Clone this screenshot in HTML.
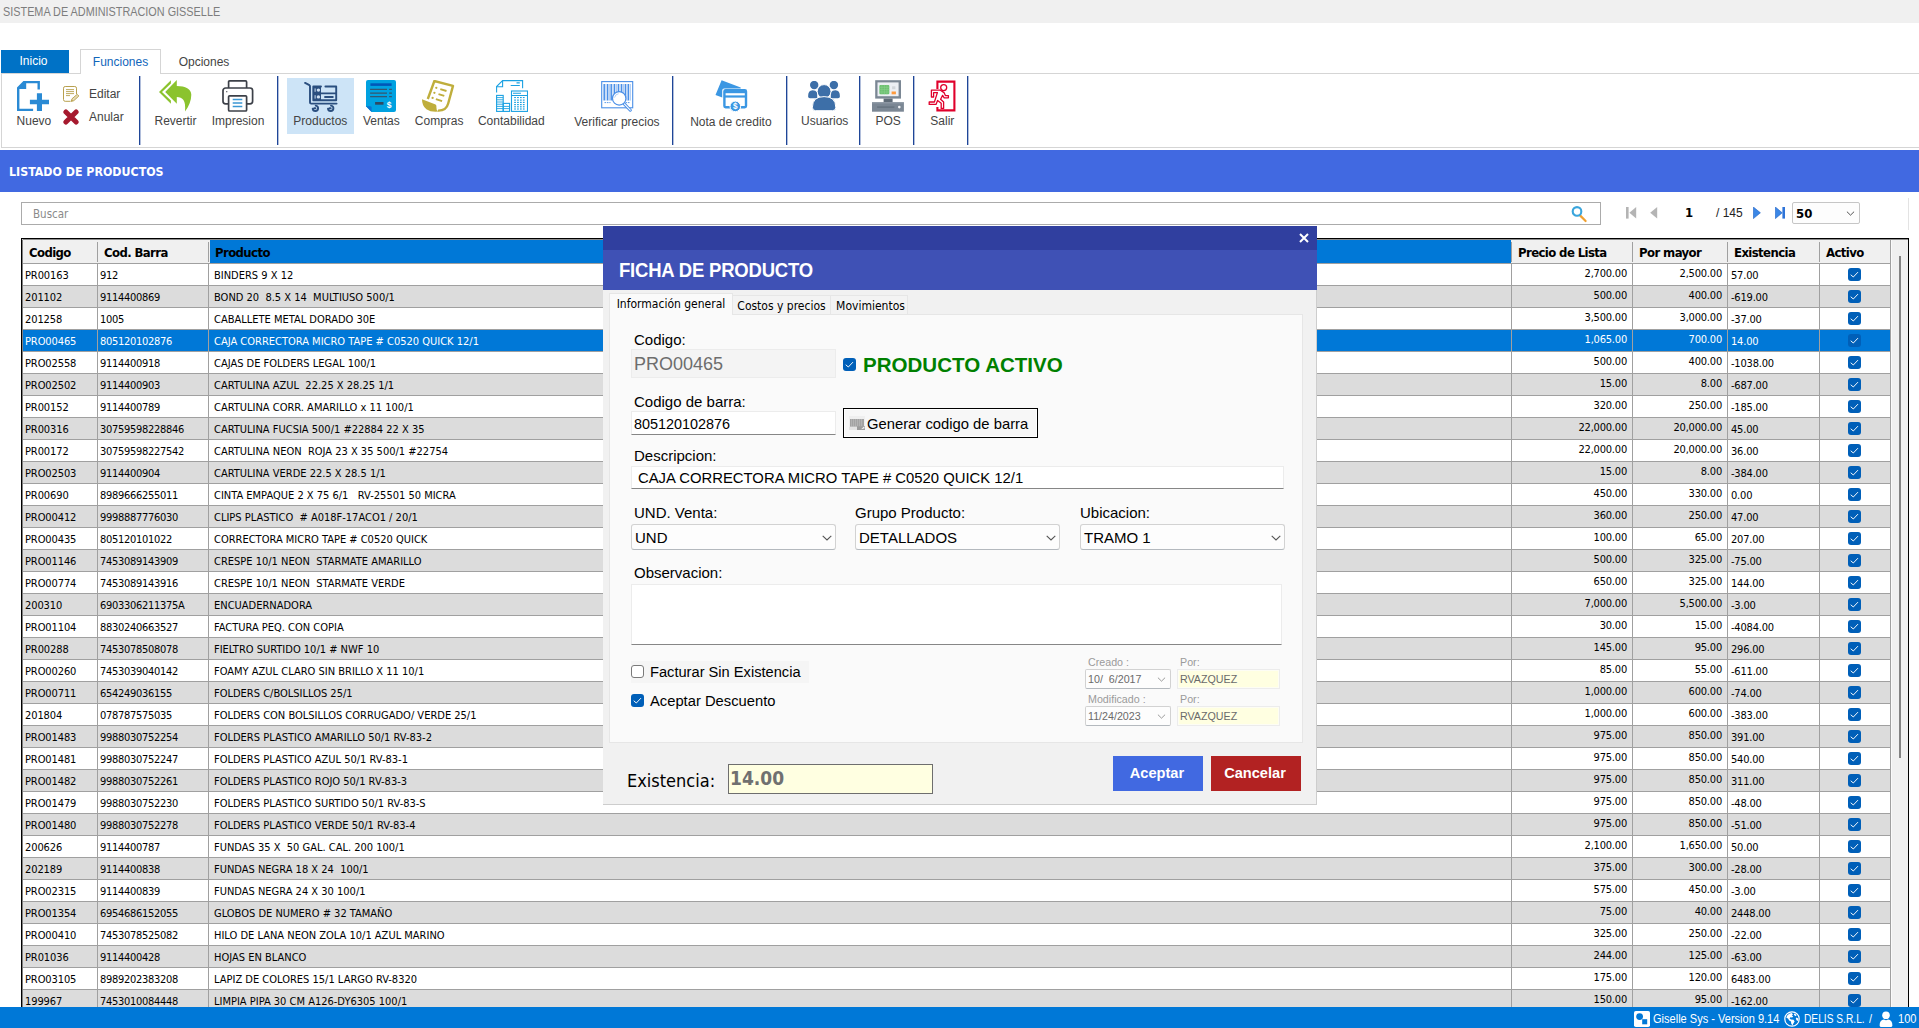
<!DOCTYPE html>
<html lang="es">
<head>
<meta charset="utf-8">
<title>SISTEMA DE ADMINISTRACION GISSELLE</title>
<style>
html,body{margin:0;padding:0}
body{width:1919px;height:1028px;overflow:hidden;background:#fff;position:relative;font-family:"Liberation Sans",sans-serif;font-size:12px;color:#000}
.abs,.abs>*{position:absolute}
div,span,i,b{box-sizing:border-box}
.tah{font-family:"DejaVu Sans Condensed","DejaVu Sans","Liberation Sans",sans-serif;font-stretch:condensed}
/* title bar */
#tb{position:absolute;left:0;top:0;width:1919px;height:23px;background:#f0f0f0}
#tb span{position:absolute;left:3px;top:0;line-height:23px;font-size:13px;color:#7d7d7d;white-space:nowrap;transform:scaleX(.835);transform-origin:0 50%}
/* tabs */
.tab{position:absolute;white-space:nowrap;font-size:12px;text-align:center}
#t1{left:1px;top:50px;width:68px;height:23px;background:#0072c6;color:#fff;line-height:22px;padding-right:3px}
#t2{left:80px;top:49px;width:81px;height:25px;background:#fff;border:1px solid #d5d5d5;border-bottom:none;color:#1166bb;line-height:24px;z-index:2}
#t3{left:171px;top:50px;width:66px;height:23px;color:#444;line-height:24px}
#rb{position:absolute;left:1px;top:73px;width:1925px;height:75px;border:1px solid #d5d5d5;background:#fff}
.sep{position:absolute;top:76px;width:1px;height:69px;background:#1f4698;box-shadow:1px 0 0 rgba(31,70,152,.35)}
.lbl{position:absolute;white-space:nowrap;font-size:12px;color:#444;line-height:14px}
.lc{width:120px;margin-left:-60px;text-align:center}
.ico{position:absolute}
#hl{position:absolute;left:287px;top:78px;width:67px;height:56px;background:#cde4f7}
#pgc{position:absolute;left:1792px;top:202px;width:68px;height:22px;border:1px solid #c6c6c6;border-radius:2px;background:#fdfdfd}
#pgc span{position:absolute;left:3px;top:0;line-height:21px;font-size:13px;font-weight:bold}
#pgc svg{position:absolute;right:4px;top:8px}
#redge{position:absolute;left:1908px;top:198px;width:1px;height:32px;background:#e3e3e3}
/* blue bar */
#bar{position:absolute;left:0;top:150px;width:1919px;height:42px;background:#4169e1}
#bar span{position:absolute;left:9px;top:0;line-height:45px;color:#fff;font-weight:bold;font-size:12.3px;white-space:nowrap}
/* search */
#sb{position:absolute;left:21px;top:202px;width:1580px;height:23px;border:1px solid #ababab;background:#fff}
#sb span{position:absolute;left:11px;top:0;line-height:23px;font-size:11.5px;color:#8a8a8a}
.nav{position:absolute;white-space:nowrap}
/* grid */
.grid{position:absolute;left:21px;top:238px;width:1888px;height:800px;border:solid #000;border-width:2px 1px 0 2px;background:#f0f0f0;overflow:hidden;font-size:11px}
.gh{position:absolute;left:0;top:0;width:1867px;height:24px;background:#f0f0f0;border-bottom:1px solid #a0a0a0}
.hc{position:absolute;top:0;height:23px;line-height:25px;font-weight:bold;font-size:13px;letter-spacing:-.6px;white-space:nowrap}
.hc span{position:absolute;left:6px;top:0}
.hc:after{content:"";position:absolute;right:-1px;top:2px;width:1px;height:20px;background:#a0a0a0}
.hc.last:after{top:0;height:24px}
.hc.sel{background:linear-gradient(90deg,#f0f0f0 1px,#0078d7 1px)}
.r{position:absolute;left:0;width:1868px;height:22px;background:#fff;border-bottom:1px solid #a0a0a0;line-height:23px;white-space:pre}
.r.alt{background:#dcdcdc}
.r.sel{background:#0078d7;color:#fff}
.c{position:absolute;top:0;height:21px;border-right:1px solid #a0a0a0;overflow:hidden}
.c1{left:0;width:75px;padding-left:2px;letter-spacing:-.1px}
.c2{left:75px;width:111px;padding-left:2px;letter-spacing:-.3px}
.c3{left:186px;width:1303px;padding-left:5px}
.c4{left:1489px;width:121px;text-align:right;padding-right:5px;letter-spacing:-.2px;line-height:19px}
.c5{left:1610px;width:95px;text-align:right;padding-right:5px;letter-spacing:-.2px;line-height:19px}
.c6{left:1705px;width:92px;padding-left:3px;letter-spacing:-.2px}
.c7{left:1797px;width:71px}
.ck{position:absolute;left:28px;top:4px;width:13px;height:13px;border-radius:3px;background:#005fb8;display:block}
.ck svg{position:absolute;left:0;top:0}
.vsb{position:absolute;left:1868px;top:0;width:17px;height:800px;background:#f0f0f0;border-left:1px solid #fafafa}
.vsb i{position:absolute;left:7px;top:16px;width:2px;height:502px;background:#838383;display:block}

/* dialog */
#dlg{position:absolute;left:603px;top:226px;width:714px;height:579px;box-shadow:inset -1px -1px 0 #cdcdcd;background:#f1f1f1;font-size:15px;color:#000}
#dlg>*{position:absolute}
#dt1{left:0;top:0;width:714px;height:24px;background:#303f9f}
#dt2{left:0;top:24px;width:714px;height:40px;background:#3f51b5}
#dt2 span{position:absolute;left:16px;top:0;line-height:40px;color:#fff;font-weight:bold;font-size:19.5px;white-space:nowrap;letter-spacing:-.2px;transform:scaleX(.948);transform-origin:0 50%}
#dx{left:696px;top:7px}
#page{left:6px;top:88px;width:694px;height:429px;background:#fafafa;border:1px solid #e6e6e6}
.dtab{font-size:12px;white-space:nowrap;text-align:center;color:#000}
#dtab1{left:6px;top:67px;width:124px;height:22px;background:#fafafa;border:1px solid #e6e6e6;border-bottom:none;line-height:20px}
#dtab2{left:129px;top:69px;width:99px;height:19px;background:#f3f3f3;border:1px solid #e6e6e6;border-bottom:none;line-height:20px}
#dtab3{left:227px;top:69px;width:78px;height:19px;background:#f3f3f3;border:1px solid #e6e6e6;border-bottom:none;line-height:20px;text-indent:3px}
.fl{white-space:nowrap;font-size:15px;line-height:18px;color:#000}
.inp{background:#fff;border:1px solid #ececec}
.inp.ul{border-bottom:1px solid #868686}
.inp span{position:absolute;white-space:nowrap}
#icod{left:28px;top:123px;width:205px;height:29px;background:#f4f4f4;border:1px solid #ececec}
#icod span{left:2px;top:0;line-height:29px;font-size:18px;color:#6d6d6d}
.ck2{width:13px;height:13px;border-radius:3px;background:#005fb8;display:block}
.ck2 svg{position:absolute;left:0;top:0}
.cku{width:13px;height:13px;border-radius:3px;background:#fff;border:1px solid #7a7a7a;display:block}
#pact{left:260px;top:127px;font-size:20.55px;font-weight:bold;color:#008000;white-space:nowrap;line-height:24px}
#ibar{left:28px;top:185px;width:205px;height:24px}
#ibar span{left:2px;top:0;line-height:25px;font-size:14.4px}
#bgen{left:240px;top:182px;width:195px;height:30px;border:1px solid #000;background:#f7f7f7;box-shadow:inset 0 0 0 1px #fff}
#bgen span{position:absolute;left:23px;top:0;line-height:30px;white-space:nowrap;font-size:14.8px}
#ides{left:28px;top:240px;width:653px;height:23px}
#ides span{left:6px;top:0;line-height:22px;font-size:14.85px}
.cmb{width:205px;height:26px;background:#fdfdfd;border:1px solid #d2d2d2;border-bottom-color:#b4b9be;border-radius:3px}
.cmb span{position:absolute;left:3px;top:0;line-height:25px;white-space:nowrap}
.cmb svg{position:absolute;right:3px;top:10px}
#iobs{left:28px;top:358px;width:651px;height:61px}
#cbg1{left:28px;top:435px;width:178px;height:22px;background:#f5f5f5}
.sl{font-size:10.7px;color:#9a9a9a;white-space:nowrap;line-height:13px}
.dcb{width:86px;height:20px;background:#fdfdfd;border:1px solid #d2d2d2;border-bottom-color:#b4b9be;border-radius:2px}
.dcb span{position:absolute;left:2px;top:0;line-height:18px;font-size:10.7px;color:#6a6a6a;white-space:pre}
.dcb svg{position:absolute;right:4px;top:7px}
.ybx{width:103px;height:20px;box-shadow:inset 0 0 0 1px #fdfdf4;background:#ffffe1;border:1px solid #ececec}
.ybx span{position:absolute;left:2px;top:0;line-height:18px;font-size:10.7px;color:#6a6a6a}
#exl{left:24px;top:543px;font-size:18px;line-height:24px;white-space:nowrap}
#exb{left:125px;top:538px;width:205px;height:30px;background:#ffffe1;border:1px solid #6e6e6e}
#exb span{position:absolute;left:1px;top:0;line-height:27px;font-size:19px;font-weight:bold;color:#707070}
.btn{padding-right:2px;color:#fff;font-weight:bold;font-size:14.6px;text-align:center;white-space:nowrap}
#bok{left:510px;top:530px;width:90px;height:35px;background:#4169e1;line-height:34px}
#bcn{left:608px;top:530px;width:90px;height:35px;background:#b22222;line-height:34px}
.gl1{position:absolute;left:22px;top:239px;width:1px;height:768px;background:rgba(255,255,255,.5)}
.gl2{position:absolute;left:22px;top:239px;width:1886px;height:1px;background:rgba(255,255,255,.55)}
/* status */
#st{position:absolute;left:0;top:1007px;width:1919px;height:21px;background:#0078d7;color:#fff;font-size:12px}
#st span{position:absolute;top:0;line-height:24px;white-space:nowrap;transform:scaleX(.92);transform-origin:0 50%}
#st svg{position:absolute}
</style>
</head>
<body>
<div id="tb"><span>SISTEMA DE ADMINISTRACION GISSELLE</span></div>
<div class="tab" id="t1">Inicio</div>
<div class="tab" id="t2">Funciones</div>
<div class="tab" id="t3">Opciones</div>
<div id="rb"></div>
<div id="hl"></div>
<i class="sep" style="left:139px"></i><i class="sep" style="left:277px"></i><i class="sep" style="left:672px"></i><i class="sep" style="left:786px"></i><i class="sep" style="left:859px"></i><i class="sep" style="left:913px"></i><i class="sep" style="left:967px"></i>

<!-- Nuevo -->
<svg class="ico" style="left:17px;top:81px" width="32" height="31" viewBox="0 0 32 31"><path d="M6.4 0H22.9V8.6H20.5V2.3H9.2V8H2.4V27.7H16.1V30.1H0V6.4Z" fill="#2a8ad4"/><path d="M19.9 12.3h5.1v6.45h7v4.5h-7v6.85h-5.1v-6.85h-7v-4.5h7z" fill="#2a8ad4"/></svg>
<span class="lbl lc" style="left:33.9px;top:114px">Nuevo</span>
<!-- Editar -->
<svg class="ico" style="left:63px;top:86px" width="17" height="16" viewBox="0 0 17 16"><path d="M13.5 8V2.2Q13.5 .5 11.8 .5H2.2Q.5 .5 .5 2.2V13.6Q.5 15.3 2.2 15.3H7.5" fill="none" stroke="#b8a04e" stroke-width="1"/><path d="M3 3.6H11M3 5.6H11M3 7.6H11M3 9.6H7" stroke="#b8a04e" stroke-width=".9"/><path d="M8.2 15.4L9 12.8L14.2 8.3L15.9 10L10.8 14.7Z" fill="#e6dbb4" stroke="#b8a04e" stroke-width=".9" stroke-linejoin="round"/><path d="M8.2 15.4L8.8 13.6L10 14.8Z" fill="#b8a04e"/></svg>
<span class="lbl" style="left:89px;top:87px">Editar</span>
<!-- Anular -->
<svg class="ico" style="left:63px;top:109px" width="16" height="16" viewBox="0 0 16 16"><path d="M2.9 2.9L13.1 13.1M13.1 2.9L2.9 13.1" stroke="#a6192e" stroke-width="5" stroke-linecap="round"/></svg>
<span class="lbl" style="left:89px;top:110px">Anular</span>
<!-- Revertir -->
<svg class="ico" style="left:159px;top:80px" width="33" height="32" viewBox="0 0 33 32"><path d="M11.9 .3L0 11.9L11.9 23.8V20.6L3 11.9L11.9 3.4Z" fill="#8bc32e"/><path d="M17.8 0L6.2 11.9L17.8 23.8V17.1C23.5 17.1 27.2 20.5 26 31.6C30 26 32.3 20.5 32.3 14.7C32.3 9.2 26.5 5.9 17.8 5.9Z" fill="#8bc32e"/></svg>
<span class="lbl lc" style="left:175.5px;top:114px">Revertir</span>
<!-- Impresion -->
<svg class="ico" style="left:222px;top:80px" width="32" height="32" viewBox="0 0 32 32"><g fill="#fff" stroke="#3c4048" stroke-width="1.7" stroke-linejoin="round"><path d="M6.6 8V2Q6.6 .9 7.7 .9H23.5Q24.6 .9 24.6 2V8"/><rect x="1" y="8" width="29.6" height="15.8" rx="2.6"/><rect x="6.6" y="15.8" width="18" height="15.2" rx="1"/></g><path d="M10.7 19.4H20.3M10.7 22.9H20.3M10.7 26.5H20.3" stroke="#3b97d3" stroke-width="1.5"/><rect x="4" y="11.3" width="1.4" height=".9" fill="#3c4048"/></svg>
<span class="lbl lc" style="left:238px;top:114px">Impresion</span>
<!-- Productos -->
<svg class="ico" style="left:303.7px;top:81.5px" width="34" height="31" viewBox="0 0 34 31"><g fill="none" stroke="#2b4f7f" stroke-width="1.9" stroke-linecap="round" stroke-linejoin="round"><path d="M1.1 .9L5.4 3.2Q6 3.6 6 4.4V20.4Q6 21.6 7.2 21.6H32.6"/><path d="M21.4 4.5H32.2V18.3H9.3V4.5H17M9.3 11.4H32.2"/><path d="M21 15H28.8"/><path d="M8.7 26.6A2.7 2.7 0 1 0 11.7 23.6M10.2 26.2H11.4"/><path d="M24 26.6A2.7 2.7 0 1 0 27 23.6M25.5 26.2H26.7"/></g><rect x="9.3" y="4.5" width="7.7" height="13.8" fill="#2b4f7f"/><circle cx="14.4" cy="8.1" r="1.7" fill="#cfe0f2"/><circle cx="14.4" cy="14.9" r="1.7" fill="#cfe0f2"/><rect x="10.6" y="6.4" width="1" height="3.4" fill="#cfe0f2"/><rect x="10.6" y="13.2" width="1" height="3.4" fill="#cfe0f2"/></svg>
<span class="lbl lc" style="left:320.3px;top:114px">Productos</span>
<!-- Ventas -->
<svg class="ico" style="left:366px;top:80px" width="30" height="32" viewBox="0 0 30 32"><path d="M2 0H28Q30 0 30 2V30Q30 32 28 32H5.6L0 26.2V2Q0 0 2 0Z" fill="#00a1e0"/><path d="M0 26.2H4.2Q5.6 26.2 5.6 27.6V32Z" fill="#0a73d0"/><rect x="4.4" y="3.3" width="21.2" height="2.6" fill="#0057b8"/><path d="M4.1 9.4H21M23.1 9.4H25.9M4.1 13.1H21M23.1 13.1H25.9M4.1 16.7H21M23.1 16.7H25.9" stroke="#35566f" stroke-width="1.2"/><rect x="9.1" y="22" width="8.4" height="2.7" fill="#2f4a63"/><text x="20.8" y="27.9" font-family="Liberation Sans, sans-serif" font-weight="bold" font-size="8.5" fill="#fff">$</text></svg>
<span class="lbl lc" style="left:381.4px;top:114px">Ventas</span>
<!-- Compras -->
<svg class="ico" style="left:421px;top:80px" width="34" height="33" viewBox="0 0 34 33"><path d="M6.8 19L13.4 1L32 5.9L27.2 23.5Q25.3 30.8 17 30.6" fill="none" stroke="#bfae3c" stroke-width="2.4" stroke-linejoin="round"/><path d="M1 19.2L14.6 24.6Q15.8 25.6 15.4 27.2Q15 29.6 17.4 31.6Q10 32.4 5.4 29.2Q1 26 1 19.2Z" fill="#bfae3c"/><circle cx="15.3" cy="7.8" r="1.15" fill="#bfae3c"/><circle cx="13.4" cy="12.8" r="1.15" fill="#bfae3c"/><circle cx="11.6" cy="17.9" r="1.15" fill="#bfae3c"/><path d="M19.3 9.1L25.5 11M17.5 14.2L23.3 15.9M14.9 19.2L21.1 21.2" stroke="#bfae3c" stroke-width="1.9"/></svg>
<span class="lbl lc" style="left:439.2px;top:114px">Compras</span>
<!-- Contabilidad -->
<svg class="ico" style="left:496px;top:80px" width="32" height="32" viewBox="0 0 32 32"><g fill="none" stroke="#1ba1e2" stroke-width="1.1"><path d="M.6 12.4V6.6L6.6 .6H26.6V8.2"/><path d="M6.6 .6V6.8H.6"/><path d="M14.7 5.5H23.8M20.5 2.9H23.8"/><rect x="15.5" y="11" width="16" height="20.4"/><path d="M15.5 15.5H31.5M17 13.2H25"/><rect x=".6" y="15.4" width="6.6" height="16"/><rect x="7.2" y="23.4" width="6.4" height="8"/><path d="M.6 17.6H7.2M.6 19.8H7.2M.6 22H7.2M.6 24.2H7.2M.6 26.4H13.6M.6 28.6H13.6" stroke-width=".9"/></g><g fill="#1ba1e2"><rect x="18.2" y="17" width="1.7" height="1.1"/><rect x="21.1" y="17" width="1.7" height="1.1"/><rect x="24" y="17" width="1.7" height="1.1"/><rect x="26.9" y="17" width="1.7" height="1.1"/><rect x="18.2" y="19.5" width="1.7" height="1.2"/><rect x="21.1" y="19.5" width="1.7" height="1.2"/><rect x="24" y="19.5" width="1.7" height="1.2"/><rect x="26.9" y="19.5" width="1.7" height="1.2"/><rect x="18.2" y="21.8" width="1.7" height="1.2"/><rect x="21.1" y="21.8" width="1.7" height="1.2"/><rect x="24" y="21.8" width="1.7" height="1.2"/><rect x="26.9" y="21.8" width="1.7" height="1.2"/><rect x="18.2" y="24" width="1.7" height="1.2"/><rect x="21.1" y="24" width="1.7" height="1.2"/><rect x="24" y="24" width="1.7" height="1.2"/><rect x="26.9" y="24" width="1.7" height="1.2"/><rect x="18.2" y="26.2" width="1.7" height="1.2"/><rect x="21.1" y="26.2" width="1.7" height="1.2"/><rect x="24" y="26.2" width="1.7" height="1.2"/><rect x="26.9" y="26.2" width="1.7" height="1.2"/><rect x="18.2" y="28.4" width="1.7" height="1.2"/><rect x="21.1" y="28.4" width="1.7" height="1.2"/><rect x="24" y="28.4" width="1.7" height="1.2"/><rect x="26.9" y="28.4" width="1.7" height="1.2"/></g></svg>
<span class="lbl lc" style="left:511.3px;top:114px">Contabilidad</span>
<!-- Verificar precios -->
<svg class="ico" style="left:601px;top:81px" width="33" height="31" viewBox="0 0 33 31"><rect x=".7" y=".6" width="31" height="26.2" fill="#fff" stroke="#4a8fe7" stroke-width="1.1"/><path d="M3.2 3V19.6M6.6 3V19.6M10.2 3V19.6M13.5 3V19.6M17.4 3V19.6M20.6 3V19.6M24.4 3V19.6M27.4 3V19.6" stroke="#4a8fe7" stroke-width="1.5"/><path d="M4.9 3V19.6M8.3 3V19.6M12 3V19.6M15.4 3V19.6M19 3V19.6M22.4 3V19.6M26 3V19.6M29.3 3V19.6" stroke="#8ab6f0" stroke-width=".8"/><path d="M3.5 21.6H9.5M24.5 21.6H28.8" stroke="#4a8fe7" stroke-width=".9" stroke-dasharray="1.6 .8"/><path d="M23 22.6L29.3 29.2" stroke="#4a8fe7" stroke-width="3" stroke-linecap="round"/><path d="M23 22.6L29.3 29.2" stroke="#fff" stroke-width="1.1" stroke-linecap="round"/><circle cx="18.2" cy="17.4" r="6.7" fill="#fff" stroke="#4a8fe7" stroke-width="1.2"/><path d="M13.6 16.6A4.8 4.8 0 0 1 17.6 12.7" fill="none" stroke="#a9c9f3" stroke-width=".9"/></svg>
<span class="lbl lc" style="left:616.9px;top:115px">Verificar precios</span>
<!-- Nota de credito -->
<svg class="ico" style="left:715px;top:80px" width="33" height="32" viewBox="0 0 33 32"><path d="M6.6 .2L25.7 7.5V12H10V18.6L.5 15.1Z" fill="#3b97e3"/><rect x="7.2" y="8.6" width="26" height="21" rx="2" fill="#fff"/><path d="M15.2 27.2H10.6Q9.4 27.2 9.4 26V11.4Q9.4 10.2 10.6 10.2H29.8Q31 10.2 31 11.4V26Q31 27.2 29.8 27.2H25.6" fill="none" stroke="#3b97e3" stroke-width="2.4"/><rect x="9.4" y="10.2" width="21.6" height="3" fill="#3b97e3"/><rect x="9.4" y="15.4" width="21.6" height="2.2" fill="#3b97e3"/><circle cx="20.3" cy="26.4" r="5.3" fill="#3b97e3" stroke="#fff" stroke-width="1"/><text x="18" y="29.3" font-family="Liberation Sans, sans-serif" font-weight="bold" font-size="8.2" fill="#fff">$</text></svg>
<span class="lbl lc" style="left:730.9px;top:115px">Nota de credito</span>
<!-- Usuarios -->
<svg class="ico" style="left:808px;top:81px" width="32" height="30" viewBox="0 0 32 30"><g fill="#3d6fa8"><circle cx="6.2" cy="4" r="4.2"/><circle cx="25.9" cy="4" r="4.2"/><path d="M.1 15.4Q0 9.2 4.6 9.2Q7.6 9.2 9.2 11.6V17.2H2Q.1 17.2 .1 15.4Z"/><path d="M31.9 15.4Q32 9.2 27.4 9.2Q24.4 9.2 22.8 11.6V17.2H30Q31.9 17.2 31.9 15.4Z"/></g><circle cx="16.1" cy="10.5" r="6.9" fill="#3d6fa8" stroke="#fff" stroke-width="1"/><path d="M4.4 26.4Q4.4 15.6 16.1 15.6Q27.8 15.6 27.8 26.4Q27.8 29.7 24.6 29.7H7.6Q4.4 29.7 4.4 26.4Z" fill="#3d6fa8" stroke="#fff" stroke-width="1"/></svg>
<span class="lbl lc" style="left:824.7px;top:114px">Usuarios</span>
<!-- POS -->
<svg class="ico" style="left:872px;top:80px" width="32" height="32" viewBox="0 0 32 32"><rect x="3.2" y=".2" width="25.8" height="18.4" fill="#7b8794"/><rect x="5.5" y="2.4" width="21.1" height="13.8" fill="#eceff4"/><rect x="7.4" y="4.9" width="9.9" height="9.4" rx="1" fill="#6cc070"/><path d="M9.9 4.9V14.3M12.4 4.9V14.3M14.9 4.9V14.3M7.4 7.3H17.3M7.4 9.6H17.3M7.4 12H17.3" stroke="#8fd391" stroke-width=".5"/><rect x="20.1" y="6.3" width="3.3" height="2.9" fill="#d2d6db"/><rect x="19.6" y="11.5" width="4.3" height="2.8" fill="#ff9a3c"/><rect x="11.6" y="18.6" width="9" height="3.8" fill="#5f6b77"/><rect x="0" y="22.3" width="31.9" height="9.4" fill="#7b8794"/><rect x="0" y="22.3" width="31.9" height="1.2" fill="#8b96a2"/><path d="M5.1 27.1H22.4" stroke="#66727e" stroke-width="1.4"/><circle cx="27.3" cy="27.1" r="1.3" fill="#f2f4f6"/></svg>
<span class="lbl lc" style="left:888.2px;top:114px">POS</span>
<!-- Salir -->
<svg class="ico" style="left:928px;top:80px" width="29" height="32" viewBox="0 0 29 32"><path d="M9.4 9V1.6H26.4V30.4H9.4V27" fill="none" stroke="#e0002b" stroke-width="2.1"/><g fill="#fff" stroke="#e0002b" stroke-width="1.3" stroke-linejoin="round"><circle cx="15.7" cy="7.6" r="3"/><path d="M3.4 10.2H12.4L16 12.6L17.4 15.6H20.4V17.8H16.2L14.6 15.4L12.6 19.2L15.6 22V28.4H13.2V23.2L9.6 20.4L8 24.4H1.2V22H6.4L9.4 12.6H5.6V17H3.4Z"/></g></svg>
<span class="lbl lc" style="left:942.3px;top:114px">Salir</span>

<div id="bar" class="tah"><span>LISTADO DE PRODUCTOS</span></div>
<div id="sb" class="tah"><span>Buscar</span></div>
<svg class="ico" style="left:1571px;top:206px" width="17" height="17" viewBox="0 0 17 17"><path d="M9 9.4L14.6 15" stroke="#f0a030" stroke-width="2.2" stroke-linecap="round"/><circle cx="6" cy="5.4" r="4.3" fill="#fff" stroke="#3aa5dc" stroke-width="2.1"/></svg>
<!-- pager -->
<svg class="ico" style="left:1626px;top:207px" width="11" height="12" viewBox="0 0 11 12"><rect x="0" y="0" width="2.6" height="11.6" fill="#b4b4b4"/><path d="M10.2 0L3.4 5.8L10.2 11.6Z" fill="#b4b4b4"/></svg>
<svg class="ico" style="left:1650px;top:207px" width="8" height="12" viewBox="0 0 8 12"><path d="M7.2 0L.2 5.8L7.2 11.6Z" fill="#b4b4b4"/></svg>
<span class="nav tah" style="left:1685px;top:205px;font-size:13px;font-weight:bold;line-height:16px">1</span>
<span class="nav" style="left:1716px;top:205px;font-size:12px;line-height:16px;color:#222">/ 145</span>
<svg class="ico" style="left:1753px;top:207px" width="8" height="12" viewBox="0 0 8 12"><path d="M.4 0L7.4 5.8L.4 11.6Z" fill="#3b87e6" stroke="#1f62c4" stroke-width=".6"/></svg>
<svg class="ico" style="left:1775px;top:207px" width="11" height="12" viewBox="0 0 11 12"><path d="M.4 0L7.2 5.8L.4 11.6Z" fill="#3b87e6" stroke="#1f62c4" stroke-width=".6"/><rect x="7.4" y="0" width="2.6" height="11.6" fill="#2f74d8"/></svg>
<div id="pgc"><span class="tah">50</span><svg viewBox="0 0 10 6" width="9" height="5"><path d="M.7 .8L5 5L9.3 .8" fill="none" stroke="#444" stroke-width="1.1"/></svg></div>
<i id="redge"></i>
<div class="grid tah">
<div class="gh">
<div class="hc" style="left:0px;width:74px"><span>Codigo</span></div>
<div class="hc" style="left:75px;width:110px"><span>Cod. Barra</span></div>
<div class="hc sel" style="left:186px;width:1302px"><span>Producto</span></div>
<div class="hc" style="left:1489px;width:120px"><span>Precio de Lista</span></div>
<div class="hc" style="left:1610px;width:94px"><span>Por mayor</span></div>
<div class="hc" style="left:1705px;width:91px"><span>Existencia</span></div>
<div class="hc last" style="left:1797px;width:70px"><span>Activo</span></div>
</div>
<div class="r" style="top:24px"><span class="c c1">PR00163</span><span class="c c2">912</span><span class="c c3">BINDERS 9 X 12</span><span class="c c4">2,700.00</span><span class="c c5">2,500.00</span><span class="c c6">57.00</span><span class="c c7"><i class="ck"><svg viewBox="0 0 13 13" width="13" height="13"><path d="M3 7 L5.3 9 L9.7 4.4" fill="none" stroke="#fff" stroke-width=".95" stroke-linecap="round" stroke-linejoin="round"/></svg></i></span></div>
<div class="r alt" style="top:46px"><span class="c c1">201102</span><span class="c c2">9114400869</span><span class="c c3">BOND 20  8.5 X 14  MULTIUSO 500/1</span><span class="c c4">500.00</span><span class="c c5">400.00</span><span class="c c6">-619.00</span><span class="c c7"><i class="ck"><svg viewBox="0 0 13 13" width="13" height="13"><path d="M3 7 L5.3 9 L9.7 4.4" fill="none" stroke="#fff" stroke-width=".95" stroke-linecap="round" stroke-linejoin="round"/></svg></i></span></div>
<div class="r" style="top:68px"><span class="c c1">201258</span><span class="c c2">1005</span><span class="c c3">CABALLETE METAL DORADO 30E</span><span class="c c4">3,500.00</span><span class="c c5">3,000.00</span><span class="c c6">-37.00</span><span class="c c7"><i class="ck"><svg viewBox="0 0 13 13" width="13" height="13"><path d="M3 7 L5.3 9 L9.7 4.4" fill="none" stroke="#fff" stroke-width=".95" stroke-linecap="round" stroke-linejoin="round"/></svg></i></span></div>
<div class="r alt sel" style="top:90px"><span class="c c1">PRO00465</span><span class="c c2">805120102876</span><span class="c c3">CAJA CORRECTORA MICRO TAPE # C0520 QUICK 12/1</span><span class="c c4">1,065.00</span><span class="c c5">700.00</span><span class="c c6">14.00</span><span class="c c7"><i class="ck"><svg viewBox="0 0 13 13" width="13" height="13"><path d="M3 7 L5.3 9 L9.7 4.4" fill="none" stroke="#fff" stroke-width=".95" stroke-linecap="round" stroke-linejoin="round"/></svg></i></span></div>
<div class="r" style="top:112px"><span class="c c1">PRO02558</span><span class="c c2">9114400918</span><span class="c c3">CAJAS DE FOLDERS LEGAL 100/1</span><span class="c c4">500.00</span><span class="c c5">400.00</span><span class="c c6">-1038.00</span><span class="c c7"><i class="ck"><svg viewBox="0 0 13 13" width="13" height="13"><path d="M3 7 L5.3 9 L9.7 4.4" fill="none" stroke="#fff" stroke-width=".95" stroke-linecap="round" stroke-linejoin="round"/></svg></i></span></div>
<div class="r alt" style="top:134px"><span class="c c1">PRO02502</span><span class="c c2">9114400903</span><span class="c c3">CARTULINA AZUL  22.25 X 28.25 1/1</span><span class="c c4">15.00</span><span class="c c5">8.00</span><span class="c c6">-687.00</span><span class="c c7"><i class="ck"><svg viewBox="0 0 13 13" width="13" height="13"><path d="M3 7 L5.3 9 L9.7 4.4" fill="none" stroke="#fff" stroke-width=".95" stroke-linecap="round" stroke-linejoin="round"/></svg></i></span></div>
<div class="r" style="top:156px"><span class="c c1">PR00152</span><span class="c c2">9114400789</span><span class="c c3">CARTULINA CORR. AMARILLO x 11 100/1</span><span class="c c4">320.00</span><span class="c c5">250.00</span><span class="c c6">-185.00</span><span class="c c7"><i class="ck"><svg viewBox="0 0 13 13" width="13" height="13"><path d="M3 7 L5.3 9 L9.7 4.4" fill="none" stroke="#fff" stroke-width=".95" stroke-linecap="round" stroke-linejoin="round"/></svg></i></span></div>
<div class="r alt" style="top:178px"><span class="c c1">PR00316</span><span class="c c2">30759598228846</span><span class="c c3">CARTULINA FUCSIA 500/1 #22884 22 X 35</span><span class="c c4">22,000.00</span><span class="c c5">20,000.00</span><span class="c c6">45.00</span><span class="c c7"><i class="ck"><svg viewBox="0 0 13 13" width="13" height="13"><path d="M3 7 L5.3 9 L9.7 4.4" fill="none" stroke="#fff" stroke-width=".95" stroke-linecap="round" stroke-linejoin="round"/></svg></i></span></div>
<div class="r" style="top:200px"><span class="c c1">PR00172</span><span class="c c2">30759598227542</span><span class="c c3">CARTULINA NEON  ROJA 23 X 35 500/1 #22754</span><span class="c c4">22,000.00</span><span class="c c5">20,000.00</span><span class="c c6">36.00</span><span class="c c7"><i class="ck"><svg viewBox="0 0 13 13" width="13" height="13"><path d="M3 7 L5.3 9 L9.7 4.4" fill="none" stroke="#fff" stroke-width=".95" stroke-linecap="round" stroke-linejoin="round"/></svg></i></span></div>
<div class="r alt" style="top:222px"><span class="c c1">PRO02503</span><span class="c c2">9114400904</span><span class="c c3">CARTULINA VERDE 22.5 X 28.5 1/1</span><span class="c c4">15.00</span><span class="c c5">8.00</span><span class="c c6">-384.00</span><span class="c c7"><i class="ck"><svg viewBox="0 0 13 13" width="13" height="13"><path d="M3 7 L5.3 9 L9.7 4.4" fill="none" stroke="#fff" stroke-width=".95" stroke-linecap="round" stroke-linejoin="round"/></svg></i></span></div>
<div class="r" style="top:244px"><span class="c c1">PR00690</span><span class="c c2">8989666255011</span><span class="c c3">CINTA EMPAQUE 2 X 75 6/1   RV-25501 50 MICRA</span><span class="c c4">450.00</span><span class="c c5">330.00</span><span class="c c6">0.00</span><span class="c c7"><i class="ck"><svg viewBox="0 0 13 13" width="13" height="13"><path d="M3 7 L5.3 9 L9.7 4.4" fill="none" stroke="#fff" stroke-width=".95" stroke-linecap="round" stroke-linejoin="round"/></svg></i></span></div>
<div class="r alt" style="top:266px"><span class="c c1">PRO00412</span><span class="c c2">9998887776030</span><span class="c c3">CLIPS PLASTICO  # A018F-17ACO1 / 20/1</span><span class="c c4">360.00</span><span class="c c5">250.00</span><span class="c c6">47.00</span><span class="c c7"><i class="ck"><svg viewBox="0 0 13 13" width="13" height="13"><path d="M3 7 L5.3 9 L9.7 4.4" fill="none" stroke="#fff" stroke-width=".95" stroke-linecap="round" stroke-linejoin="round"/></svg></i></span></div>
<div class="r" style="top:288px"><span class="c c1">PRO00435</span><span class="c c2">805120101022</span><span class="c c3">CORRECTORA MICRO TAPE # C0520 QUICK</span><span class="c c4">100.00</span><span class="c c5">65.00</span><span class="c c6">207.00</span><span class="c c7"><i class="ck"><svg viewBox="0 0 13 13" width="13" height="13"><path d="M3 7 L5.3 9 L9.7 4.4" fill="none" stroke="#fff" stroke-width=".95" stroke-linecap="round" stroke-linejoin="round"/></svg></i></span></div>
<div class="r alt" style="top:310px"><span class="c c1">PRO01146</span><span class="c c2">7453089143909</span><span class="c c3">CRESPE 10/1 NEON  STARMATE AMARILLO</span><span class="c c4">500.00</span><span class="c c5">325.00</span><span class="c c6">-75.00</span><span class="c c7"><i class="ck"><svg viewBox="0 0 13 13" width="13" height="13"><path d="M3 7 L5.3 9 L9.7 4.4" fill="none" stroke="#fff" stroke-width=".95" stroke-linecap="round" stroke-linejoin="round"/></svg></i></span></div>
<div class="r" style="top:332px"><span class="c c1">PRO00774</span><span class="c c2">7453089143916</span><span class="c c3">CRESPE 10/1 NEON  STARMATE VERDE</span><span class="c c4">650.00</span><span class="c c5">325.00</span><span class="c c6">144.00</span><span class="c c7"><i class="ck"><svg viewBox="0 0 13 13" width="13" height="13"><path d="M3 7 L5.3 9 L9.7 4.4" fill="none" stroke="#fff" stroke-width=".95" stroke-linecap="round" stroke-linejoin="round"/></svg></i></span></div>
<div class="r alt" style="top:354px"><span class="c c1">200310</span><span class="c c2">6903306211375A</span><span class="c c3">ENCUADERNADORA</span><span class="c c4">7,000.00</span><span class="c c5">5,500.00</span><span class="c c6">-3.00</span><span class="c c7"><i class="ck"><svg viewBox="0 0 13 13" width="13" height="13"><path d="M3 7 L5.3 9 L9.7 4.4" fill="none" stroke="#fff" stroke-width=".95" stroke-linecap="round" stroke-linejoin="round"/></svg></i></span></div>
<div class="r" style="top:376px"><span class="c c1">PRO01104</span><span class="c c2">8830240663527</span><span class="c c3">FACTURA PEQ. CON COPIA</span><span class="c c4">30.00</span><span class="c c5">15.00</span><span class="c c6">-4084.00</span><span class="c c7"><i class="ck"><svg viewBox="0 0 13 13" width="13" height="13"><path d="M3 7 L5.3 9 L9.7 4.4" fill="none" stroke="#fff" stroke-width=".95" stroke-linecap="round" stroke-linejoin="round"/></svg></i></span></div>
<div class="r alt" style="top:398px"><span class="c c1">PR00288</span><span class="c c2">7453078508078</span><span class="c c3">FIELTRO SURTIDO 10/1 # NWF 10</span><span class="c c4">145.00</span><span class="c c5">95.00</span><span class="c c6">296.00</span><span class="c c7"><i class="ck"><svg viewBox="0 0 13 13" width="13" height="13"><path d="M3 7 L5.3 9 L9.7 4.4" fill="none" stroke="#fff" stroke-width=".95" stroke-linecap="round" stroke-linejoin="round"/></svg></i></span></div>
<div class="r" style="top:420px"><span class="c c1">PRO00260</span><span class="c c2">7453039040142</span><span class="c c3">FOAMY AZUL CLARO SIN BRILLO X 11 10/1</span><span class="c c4">85.00</span><span class="c c5">55.00</span><span class="c c6">-611.00</span><span class="c c7"><i class="ck"><svg viewBox="0 0 13 13" width="13" height="13"><path d="M3 7 L5.3 9 L9.7 4.4" fill="none" stroke="#fff" stroke-width=".95" stroke-linecap="round" stroke-linejoin="round"/></svg></i></span></div>
<div class="r alt" style="top:442px"><span class="c c1">PRO00711</span><span class="c c2">654249036155</span><span class="c c3">FOLDERS C/BOLSILLOS 25/1</span><span class="c c4">1,000.00</span><span class="c c5">600.00</span><span class="c c6">-74.00</span><span class="c c7"><i class="ck"><svg viewBox="0 0 13 13" width="13" height="13"><path d="M3 7 L5.3 9 L9.7 4.4" fill="none" stroke="#fff" stroke-width=".95" stroke-linecap="round" stroke-linejoin="round"/></svg></i></span></div>
<div class="r" style="top:464px"><span class="c c1">201804</span><span class="c c2">078787575035</span><span class="c c3">FOLDERS CON BOLSILLOS CORRUGADO/ VERDE 25/1</span><span class="c c4">1,000.00</span><span class="c c5">600.00</span><span class="c c6">-383.00</span><span class="c c7"><i class="ck"><svg viewBox="0 0 13 13" width="13" height="13"><path d="M3 7 L5.3 9 L9.7 4.4" fill="none" stroke="#fff" stroke-width=".95" stroke-linecap="round" stroke-linejoin="round"/></svg></i></span></div>
<div class="r alt" style="top:486px"><span class="c c1">PRO01483</span><span class="c c2">9988030752254</span><span class="c c3">FOLDERS PLASTICO AMARILLO 50/1 RV-83-2</span><span class="c c4">975.00</span><span class="c c5">850.00</span><span class="c c6">391.00</span><span class="c c7"><i class="ck"><svg viewBox="0 0 13 13" width="13" height="13"><path d="M3 7 L5.3 9 L9.7 4.4" fill="none" stroke="#fff" stroke-width=".95" stroke-linecap="round" stroke-linejoin="round"/></svg></i></span></div>
<div class="r" style="top:508px"><span class="c c1">PRO01481</span><span class="c c2">9988030752247</span><span class="c c3">FOLDERS PLASTICO AZUL 50/1 RV-83-1</span><span class="c c4">975.00</span><span class="c c5">850.00</span><span class="c c6">540.00</span><span class="c c7"><i class="ck"><svg viewBox="0 0 13 13" width="13" height="13"><path d="M3 7 L5.3 9 L9.7 4.4" fill="none" stroke="#fff" stroke-width=".95" stroke-linecap="round" stroke-linejoin="round"/></svg></i></span></div>
<div class="r alt" style="top:530px"><span class="c c1">PRO01482</span><span class="c c2">9988030752261</span><span class="c c3">FOLDERS PLASTICO ROJO 50/1 RV-83-3</span><span class="c c4">975.00</span><span class="c c5">850.00</span><span class="c c6">311.00</span><span class="c c7"><i class="ck"><svg viewBox="0 0 13 13" width="13" height="13"><path d="M3 7 L5.3 9 L9.7 4.4" fill="none" stroke="#fff" stroke-width=".95" stroke-linecap="round" stroke-linejoin="round"/></svg></i></span></div>
<div class="r" style="top:552px"><span class="c c1">PRO01479</span><span class="c c2">9988030752230</span><span class="c c3">FOLDERS PLASTICO SURTIDO 50/1 RV-83-S</span><span class="c c4">975.00</span><span class="c c5">850.00</span><span class="c c6">-48.00</span><span class="c c7"><i class="ck"><svg viewBox="0 0 13 13" width="13" height="13"><path d="M3 7 L5.3 9 L9.7 4.4" fill="none" stroke="#fff" stroke-width=".95" stroke-linecap="round" stroke-linejoin="round"/></svg></i></span></div>
<div class="r alt" style="top:574px"><span class="c c1">PRO01480</span><span class="c c2">9988030752278</span><span class="c c3">FOLDERS PLASTICO VERDE 50/1 RV-83-4</span><span class="c c4">975.00</span><span class="c c5">850.00</span><span class="c c6">-51.00</span><span class="c c7"><i class="ck"><svg viewBox="0 0 13 13" width="13" height="13"><path d="M3 7 L5.3 9 L9.7 4.4" fill="none" stroke="#fff" stroke-width=".95" stroke-linecap="round" stroke-linejoin="round"/></svg></i></span></div>
<div class="r" style="top:596px"><span class="c c1">200626</span><span class="c c2">9114400787</span><span class="c c3">FUNDAS 35 X  50 GAL. CAL. 200 100/1</span><span class="c c4">2,100.00</span><span class="c c5">1,650.00</span><span class="c c6">50.00</span><span class="c c7"><i class="ck"><svg viewBox="0 0 13 13" width="13" height="13"><path d="M3 7 L5.3 9 L9.7 4.4" fill="none" stroke="#fff" stroke-width=".95" stroke-linecap="round" stroke-linejoin="round"/></svg></i></span></div>
<div class="r alt" style="top:618px"><span class="c c1">202189</span><span class="c c2">9114400838</span><span class="c c3">FUNDAS NEGRA 18 X 24  100/1</span><span class="c c4">375.00</span><span class="c c5">300.00</span><span class="c c6">-28.00</span><span class="c c7"><i class="ck"><svg viewBox="0 0 13 13" width="13" height="13"><path d="M3 7 L5.3 9 L9.7 4.4" fill="none" stroke="#fff" stroke-width=".95" stroke-linecap="round" stroke-linejoin="round"/></svg></i></span></div>
<div class="r" style="top:640px"><span class="c c1">PRO02315</span><span class="c c2">9114400839</span><span class="c c3">FUNDAS NEGRA 24 X 30 100/1</span><span class="c c4">575.00</span><span class="c c5">450.00</span><span class="c c6">-3.00</span><span class="c c7"><i class="ck"><svg viewBox="0 0 13 13" width="13" height="13"><path d="M3 7 L5.3 9 L9.7 4.4" fill="none" stroke="#fff" stroke-width=".95" stroke-linecap="round" stroke-linejoin="round"/></svg></i></span></div>
<div class="r alt" style="top:662px"><span class="c c1">PRO01354</span><span class="c c2">6954686152055</span><span class="c c3">GLOBOS DE NUMERO # 32 TAMAÑO</span><span class="c c4">75.00</span><span class="c c5">40.00</span><span class="c c6">2448.00</span><span class="c c7"><i class="ck"><svg viewBox="0 0 13 13" width="13" height="13"><path d="M3 7 L5.3 9 L9.7 4.4" fill="none" stroke="#fff" stroke-width=".95" stroke-linecap="round" stroke-linejoin="round"/></svg></i></span></div>
<div class="r" style="top:684px"><span class="c c1">PRO00410</span><span class="c c2">7453078525082</span><span class="c c3">HILO DE LANA NEON ZOLA 10/1 AZUL MARINO</span><span class="c c4">325.00</span><span class="c c5">250.00</span><span class="c c6">-22.00</span><span class="c c7"><i class="ck"><svg viewBox="0 0 13 13" width="13" height="13"><path d="M3 7 L5.3 9 L9.7 4.4" fill="none" stroke="#fff" stroke-width=".95" stroke-linecap="round" stroke-linejoin="round"/></svg></i></span></div>
<div class="r alt" style="top:706px"><span class="c c1">PR01036</span><span class="c c2">9114400428</span><span class="c c3">HOJAS EN BLANCO</span><span class="c c4">244.00</span><span class="c c5">125.00</span><span class="c c6">-63.00</span><span class="c c7"><i class="ck"><svg viewBox="0 0 13 13" width="13" height="13"><path d="M3 7 L5.3 9 L9.7 4.4" fill="none" stroke="#fff" stroke-width=".95" stroke-linecap="round" stroke-linejoin="round"/></svg></i></span></div>
<div class="r" style="top:728px"><span class="c c1">PRO03105</span><span class="c c2">8989202383208</span><span class="c c3">LAPIZ DE COLORES 15/1 LARGO RV-8320</span><span class="c c4">175.00</span><span class="c c5">120.00</span><span class="c c6">6483.00</span><span class="c c7"><i class="ck"><svg viewBox="0 0 13 13" width="13" height="13"><path d="M3 7 L5.3 9 L9.7 4.4" fill="none" stroke="#fff" stroke-width=".95" stroke-linecap="round" stroke-linejoin="round"/></svg></i></span></div>
<div class="r alt" style="top:750px"><span class="c c1">199967</span><span class="c c2">7453010084448</span><span class="c c3">LIMPIA PIPA 30 CM A126-DY6305 100/1</span><span class="c c4">150.00</span><span class="c c5">95.00</span><span class="c c6">-162.00</span><span class="c c7"><i class="ck"><svg viewBox="0 0 13 13" width="13" height="13"><path d="M3 7 L5.3 9 L9.7 4.4" fill="none" stroke="#fff" stroke-width=".95" stroke-linecap="round" stroke-linejoin="round"/></svg></i></span></div>
<div class="vsb"><i></i></div>
</div>
<i class="gl1"></i><i class="gl2"></i><div id="dlg">
<div id="dt1"></div>
<div id="dt2"><span>FICHA DE PRODUCTO</span></div>
<svg id="dx" viewBox="0 0 10 10" width="10" height="10"><path d="M1 1 L9 9 M9 1 L1 9" stroke="#fff" stroke-width="2" fill="none"/></svg>
<div id="page"></div>
<div class="dtab tah" id="dtab1">Información general</div>
<div class="dtab tah" id="dtab2">Costos y precios</div>
<div class="dtab tah" id="dtab3">Movimientos</div>

<span class="fl" style="left:31px;top:105px">Codigo:</span>
<div class="inp" id="icod"><span>PRO00465</span></div>
<i class="ck2" style="left:240px;top:132px"><svg viewBox="0 0 13 13" width="13" height="13"><path d="M3 7 L5.3 9 L9.7 4.4" fill="none" stroke="#fff" stroke-width=".95" stroke-linecap="round" stroke-linejoin="round"/></svg></i>
<span id="pact">PRODUCTO ACTIVO</span>

<span class="fl" style="left:31px;top:167px">Codigo de barra:</span>
<div class="inp ul" id="ibar"><span>805120102876</span></div>
<div id="bgen"><svg viewBox="0 0 16 14" width="16" height="14" style="position:absolute;left:5px;top:7px"><rect x="0" y="0" width="16" height="14" fill="#efefef"/><rect x="1" y="3" width="14" height="7.8" fill="#a2a2a2"/><path d="M2.6 3v7.8M4.6 3v7.8M6.6 3v7.8M8.6 3v7.8M10.6 3v7.8M12.6 3v7.8" stroke="#bdbdbd" stroke-width=".7"/><rect x="0" y="10.8" width="8" height="3.2" fill="#e4e4e4"/><rect x="8" y="10.2" width="8" height="3.8" fill="#9c9c9c"/><path d="M12 13.2L15.2 10.6L15.6 12.2Z" fill="#fff"/></svg><span>Generar codigo de barra</span></div>

<span class="fl" style="left:31px;top:221px">Descripcion:</span>
<div class="inp ul" id="ides"><span>CAJA CORRECTORA MICRO TAPE # C0520 QUICK 12/1</span></div>

<span class="fl" style="left:31px;top:278px">UND. Venta:</span>
<span class="fl" style="left:252px;top:278px">Grupo Producto:</span>
<span class="fl" style="left:477px;top:278px">Ubicacion:</span>
<div class="cmb" style="left:28px;top:298px"><span>UND</span><svg viewBox="0 0 10 6" width="10" height="6"><path d="M.7 .8 L5 5 L9.3 .8" fill="none" stroke="#555" stroke-width="1.1"/></svg></div>
<div class="cmb" style="left:252px;top:298px"><span>DETALLADOS</span><svg viewBox="0 0 10 6" width="10" height="6"><path d="M.7 .8 L5 5 L9.3 .8" fill="none" stroke="#555" stroke-width="1.1"/></svg></div>
<div class="cmb" style="left:477px;top:298px"><span>TRAMO 1</span><svg viewBox="0 0 10 6" width="10" height="6"><path d="M.7 .8 L5 5 L9.3 .8" fill="none" stroke="#555" stroke-width="1.1"/></svg></div>

<span class="fl" style="left:31px;top:338px">Observacion:</span>
<div class="inp ul" id="iobs"></div>

<div id="cbg1"></div>
<i class="cku" style="left:28px;top:439px"></i>
<span class="fl" style="left:47px;top:437px;font-size:14.65px">Facturar Sin Existencia</span>
<i class="ck2" style="left:28px;top:468px"><svg viewBox="0 0 13 13" width="13" height="13"><path d="M3 7 L5.3 9 L9.7 4.4" fill="none" stroke="#fff" stroke-width=".95" stroke-linecap="round" stroke-linejoin="round"/></svg></i>
<span class="fl" style="left:47px;top:466px;font-size:14.75px">Aceptar Descuento</span>

<span class="sl" style="left:485px;top:430px">Creado :</span>
<span class="sl" style="left:577px;top:430px">Por:</span>
<div class="dcb" style="left:482px;top:443px"><span>10/  6/2017</span><svg viewBox="0 0 10 6" width="9" height="5"><path d="M.7 .8 L5 5 L9.3 .8" fill="none" stroke="#888" stroke-width="1"/></svg></div>
<div class="ybx" style="left:574px;top:443px"><span>RVAZQUEZ</span></div>
<span class="sl" style="left:485px;top:467px">Modificado :</span>
<span class="sl" style="left:577px;top:467px">Por:</span>
<div class="dcb" style="left:482px;top:480px"><span>11/24/2023</span><svg viewBox="0 0 10 6" width="9" height="5"><path d="M.7 .8 L5 5 L9.3 .8" fill="none" stroke="#888" stroke-width="1"/></svg></div>
<div class="ybx" style="left:574px;top:480px"><span>RVAZQUEZ</span></div>

<span id="exl" class="tah">Existencia:</span>
<div id="exb" class="tah"><span>14.00</span></div>
<div class="btn" id="bok">Aceptar</div>
<div class="btn" id="bcn">Cancelar</div>
</div>
<div id="st">
<svg style="left:1634px;top:4px" width="16" height="16" viewBox="0 0 16 16"><rect x="0" y="0" width="16" height="16" rx="1.8" fill="#fff"/><circle cx="5.6" cy="5.6" r="3.4" fill="#0078d7"/><rect x="8.2" y="8.2" width="5" height="5.1" fill="#0078d7"/></svg>
<span style="left:1653px">Giselle Sys - Version 9.14</span>
<svg style="left:1784px;top:4px" width="16" height="16" viewBox="0 0 16 16"><circle cx="8" cy="8" r="7.2" fill="none" stroke="#fff" stroke-width="1.2"/><path d="M3.4 4.2Q5 2.2 7.6 2L9 3.2L7.8 4.4L9.2 5.2L8.2 6.6L6.4 6.2L5.6 7.6L7 8.6L9.6 8.8L10.6 10.6L9.4 12.6L8.4 14.6L7.2 12.4L7 10.4L5.2 9.4L4 7.4L2.4 6.8Q2.6 5.2 3.4 4.2Z" fill="#fff"/><path d="M10.4 2.4L12.6 3.8L12 5.2L10.6 4.6L9.8 3.4ZM12.4 6.6L14.4 7.4L14.2 10L12.8 9.6L11.8 7.8Z" fill="#fff"/></svg>
<span style="left:1804px;transform:scaleX(.85)">DELIS S.R.L.</span><span style="left:1869px">/</span>
<svg style="left:1879px;top:3px" width="14" height="18" viewBox="0 0 14 18"><circle cx="7" cy="5.3" r="3.8" fill="#fff"/><path d="M.6 15.4Q.6 10 5 9.6Q7 10.8 9 9.6Q13.4 10 13.4 15.4Q13.4 17 11.6 17H2.4Q.6 17 .6 15.4Z" fill="#fff"/></svg>
<span style="left:1898px">100</span></div>

</body>
</html>
